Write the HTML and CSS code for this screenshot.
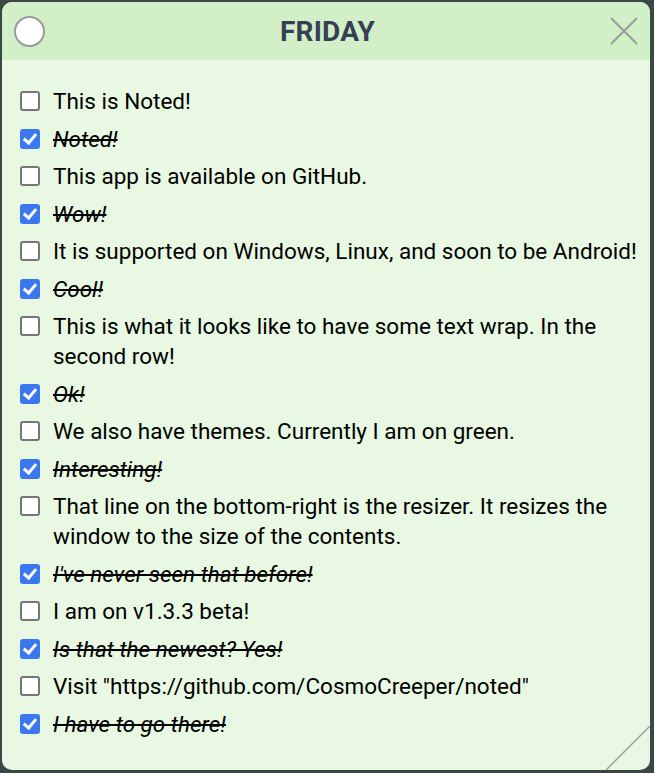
FILE: index.html
```html
<!DOCTYPE html>
<html>
<head>
<meta charset="utf-8">
<link rel="stylesheet" href="styles.css">
</head>
<body>
<div class="window">
  <header class="header">
    <span class="dot"></span>
    <h1 class="title">FRIDAY</h1>
    <svg class="close" width="28" height="28" viewBox="0 0 28 28"><path d="M1 1 L27 27 M27 1 L1 27" stroke="#9a9a9a" stroke-width="2" fill="none"/></svg>
  </header>
  <ul class="list">
    <li class="item"><span class="box"></span><span class="text">This is Noted!</span></li>
    <li class="item done"><span class="box"></span><span class="text">Noted!</span></li>
    <li class="item"><span class="box"></span><span class="text">This app is available on GitHub.</span></li>
    <li class="item done"><span class="box"></span><span class="text">Wow!</span></li>
    <li class="item"><span class="box"></span><span class="text">It is supported on Windows, Linux, and soon to be Android!</span></li>
    <li class="item done"><span class="box"></span><span class="text">Cool!</span></li>
    <li class="item"><span class="box"></span><span class="text">This is what it looks like to have some text wrap. In the second row!</span></li>
    <li class="item done"><span class="box"></span><span class="text">Ok!</span></li>
    <li class="item"><span class="box"></span><span class="text">We also have themes. Currently I am on green.</span></li>
    <li class="item done"><span class="box"></span><span class="text">Interesting!</span></li>
    <li class="item"><span class="box"></span><span class="text">That line on the bottom-right is the resizer. It resizes the window to the size of the contents.</span></li>
    <li class="item done"><span class="box"></span><span class="text">I've never seen that before!</span></li>
    <li class="item"><span class="box"></span><span class="text">I am on v1.3.3 beta!</span></li>
    <li class="item done"><span class="box"></span><span class="text">Is that the newest? Yes!</span></li>
    <li class="item"><span class="box"></span><span class="text">Visit "https://github.com/CosmoCreeper/noted"</span></li>
    <li class="item done"><span class="box"></span><span class="text">I have to go there!</span></li>
  </ul>
  <svg class="resizer" width="44" height="44" viewBox="0 0 44 44"><path d="M0 44 L44 0" stroke="#9e9e9e" stroke-width="1.5"/></svg>
</div>
</body>
</html>
```
FILE: styles.css
```css
html, body {
  margin: 0;
  padding: 0;
}
body {
  background: #3b4747;
  width: 654px;
  height: 773px;
  padding: 2px 4px 3px 2px;
  box-sizing: border-box;
  font-family: Roboto, "Noto Sans", sans-serif;
}
.window {
  position: relative;
  width: 648px;
  height: 768px;
  background: #e8f8e2;
  border-radius: 10px;
  overflow: hidden;
}
.header {
  height: 58px;
  background: #d2f0c8;
  display: flex;
  align-items: center;
  justify-content: space-between;
  padding: 0 12px 0 12px;
  box-sizing: border-box;
}
.dot {
  width: 27px;
  height: 27px;
  border: 2px solid #9a9a9a;
  border-radius: 50%;
  background: #fff;
  margin-top: 1px;
}
.title {
  margin: 0;
  font-size: 28px;
  font-weight: 700;
  color: #363f54;
  letter-spacing: 0.2px;
}
.list {
  list-style: none;
  margin: 0;
  padding: 26px 6px 0 16px;
  display: flex;
  flex-direction: column;
  gap: 7.5px;
}
.item {
  display: flex;
  align-items: flex-start;
  font-size: 22.5px;
  line-height: 30px;
  color: #000;
}
.box {
  flex: none;
  width: 16px;
  height: 16px;
  border: 2px solid #767676;
  border-radius: 3px;
  background: #fff;
  margin: 5px 13px 0 2px;
  position: relative;
}
.done .box {
  background: #3b78f0;
  border-color: #3b78f0;
}
.done .box::after {
  content: "";
  position: absolute;
  left: 4px;
  top: 0px;
  width: 5px;
  height: 10px;
  border: solid #fff;
  border-width: 0 3px 3px 0;
  transform: rotate(40deg);
}
.done .text {
  font-style: italic;
  text-decoration: line-through;
  text-decoration-thickness: 2px;
}
.resizer {
  position: absolute;
  right: 0;
  bottom: 0;
}
```
